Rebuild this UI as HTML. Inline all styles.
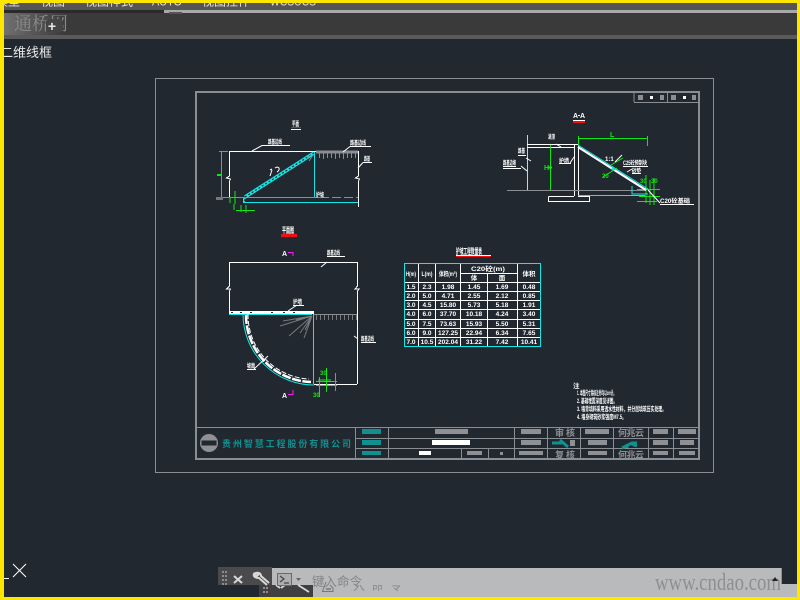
<!DOCTYPE html>
<html><head><meta charset="utf-8"><style>
html,body{margin:0;padding:0;width:800px;height:600px;overflow:hidden;background:#212830}
svg{display:block;position:absolute;left:0;top:0}
text{font-family:"Liberation Sans","Noto Sans CJK SC",sans-serif}
.w{stroke:#fff;fill:none;stroke-width:1}
.g{stroke:#12e612;fill:none;stroke-width:1}
.c{stroke:#14e6e6;fill:none;stroke-width:1}
.y{stroke:#8a8d91;fill:none;stroke-width:1}
.t{fill:#fff;font-size:6.500px;font-weight:bold;text-anchor:middle}
</style></head><body>
<svg width="800" height="600" viewBox="0 0 800 600">
<defs>
<linearGradient id="wm" x1="0" x2="1" y1="0" y2="0"><stop offset="0" stop-color="#707070"/><stop offset="1" stop-color="#3a3a3a"/></linearGradient>
<clipPath id="menu"><rect x="0" y="3" width="800" height="7"/></clipPath>
<clipPath id="cmd"><rect x="340" y="585" width="70" height="6"/></clipPath>
</defs>
<rect width="800" height="600" fill="#212830"/>
<!-- top chrome -->
<rect x="0" y="3" width="800" height="7" fill="#555"/>
<g clip-path="url(#menu)" fill="#e4e4e4" font-size="12">
<text x="-4" y="5.500">模型</text><text x="41" y="5.500">视图</text><text x="85" y="5.500">视图样式</text><text x="152" y="5.500" textLength="30" lengthAdjust="spacingAndGlyphs">AUTO</text><text x="202" y="5.500">视图控件</text><text x="270" y="5.500" textLength="46" lengthAdjust="spacingAndGlyphs">WCSUCS</text>
</g>
<rect x="0" y="10" width="800" height="25" fill="#3a3a3a"/>
<rect x="4" y="10" width="160" height="3" fill="#2a2a2a"/>
<rect x="164" y="10" width="636" height="3" fill="#a9a9a9"/>
<rect x="169" y="12" width="13" height="2" fill="#555"/>
<rect x="0" y="35" width="800" height="4" fill="#5a5a5a"/>
<rect x="4" y="13" width="62" height="22" fill="url(#wm)"/>
<text x="14" y="30" font-size="18" fill="#8a8a8a" style="font-family:'Noto Serif CJK SC',serif">通桥网</text>
<rect x="46" y="19" width="17" height="13" rx="3" fill="#444"/>
<text x="52" y="31" font-size="14" fill="#e8e8e8" text-anchor="middle" font-weight="bold">+</text>
<text x="0" y="57" font-size="13" fill="#e8e8e8">二维线框</text>

<!-- sheet -->
<g shape-rendering="crispEdges">
<rect x="155.500" y="78.500" width="558" height="394" class="y"/>
<rect x="196" y="92" width="503" height="367" fill="none" stroke="#8a8d91" stroke-width="2"/>
<path class="y" d="M634 102V92M634 102.500H699M667.500 92V102"/>
<g fill="#8a8d91"><rect x="638" y="95" width="5" height="5"/><rect x="650" y="96" width="3" height="3" fill="#fff"/><rect x="660" y="95" width="4" height="5"/><rect x="671" y="95" width="5" height="5"/><rect x="683" y="96" width="3" height="3" fill="#fff"/><rect x="692" y="95" width="4" height="5"/></g>

<!-- title block -->
<path class="y" d="M196 427.500H699M355.500 427V459M388.500 427V459M355 438.500H699M355 448.500H699M514.500 427V459M547.500 427V459M580.500 427V459M613.500 427V459M648.500 427V459M673.500 427V459M461.500 448V459M488.500 448V459"/>
<g fill="#10908f"><rect x="362" y="429" width="19" height="5"/><rect x="362" y="440" width="19" height="5"/><rect x="362" y="451" width="19" height="4"/></g>
<g fill="#8e9094"><rect x="435" y="429" width="33" height="5"/><rect x="521" y="429" width="20" height="5"/><rect x="585" y="429" width="24" height="5"/><rect x="653" y="429" width="15" height="5"/><rect x="678" y="429" width="18" height="5"/>
<rect x="521" y="440" width="20" height="5"/><rect x="588" y="440" width="19" height="5"/><rect x="653" y="440" width="15" height="5"/><rect x="680" y="440" width="14" height="5"/>
<rect x="467" y="451" width="15" height="4"/><rect x="500" y="452" width="3" height="3"/><rect x="519" y="451" width="24" height="4"/><rect x="588" y="451" width="19" height="4"/><rect x="653" y="451" width="15" height="4"/><rect x="679" y="451" width="16" height="4"/></g>
<g fill="#fff"><rect x="432" y="440" width="38" height="5"/><rect x="419" y="451" width="12" height="4"/></g>
</g>
<circle cx="209" cy="443" r="9" fill="#8e9094"/>
<rect x="201" y="440" width="16" height="6" fill="#212830" stroke="#8e9094"/>
<text x="222" y="447" font-size="9" font-weight="bold" fill="#10908f" textLength="129" lengthAdjust="spacing">贵州智慧工程股份有限公司</text>
<g font-size="9" fill="#8e9094" font-weight="bold" style="font-family:'Noto Serif CJK SC',serif">
<text x="555" y="436" textLength="20" lengthAdjust="spacing">审核</text><text x="618" y="436" textLength="26" lengthAdjust="spacing">何兆云</text><text x="555" y="458" textLength="20" lengthAdjust="spacing">复核</text><text x="618" y="458" textLength="26" lengthAdjust="spacing">何兆云</text>
</g>
<path d="M552 443H564M560 440L568 447" stroke="#10908f" stroke-width="3" fill="none"/>
<path d="M622 448L632 443H637M627 444V448M632 444L637 446" stroke="#10908f" stroke-width="3" fill="none"/>
<rect x="570" y="440" width="5" height="6" fill="#8e9094"/>

<!-- notes -->
<g fill="#fff" font-size="6.500" font-weight="bold">
<text x="573" y="388">注</text>
<text x="577" y="395" textLength="39" lengthAdjust="spacingAndGlyphs">1. 本图尺寸除标注外均以cm计。</text>
<text x="577" y="403" textLength="40" lengthAdjust="spacingAndGlyphs">2. 基础埋置深度见详图。</text>
<text x="577" y="411" textLength="89" lengthAdjust="spacingAndGlyphs">3. 墙背填料采用透水性材料，并分层填筑压实处理。</text>
<text x="577" y="419" textLength="49" lengthAdjust="spacingAndGlyphs">4. 墙身砌筑砂浆强度M7.5。</text>
</g>

<!-- plan view -->
<g shape-rendering="crispEdges">
<path class="w" d="M229.500 151.500H358.500M229.500 151V176M229.500 181V197M358.500 151V176M358.500 181V207"/>
<path class="w" d="M229.500 176L226.500 178L230.500 179L229.500 181M358.500 176L355.500 178L359.500 179L358.500 181"/>
<path d="M216 197.500H320" stroke="#8a8d91"/>
<path d="M320 197.500H358" stroke="#8a8d91" stroke-dasharray="9 3"/>
<rect x="216" y="197" width="7" height="3" fill="#777"/>
<path class="c" d="M243 202.500H358M314.500 152V197M243.500 198V202"/>
<path class="g" d="M219 151.500H228M221.500 152V197M217 174.500H222M217 175.500H222M235 191V204M230 198V203M234 204V210M236 210.500H255M246 205V213M241 205V212"/>
</g>
<path d="M245 197L314 153" stroke="#14e6e6" stroke-width="3.500" fill="none"/>
<path d="M245 197L314 153" stroke="#212830" stroke-width="1.200" stroke-dasharray="2 2" fill="none"/>
<path d="M246 198C243 199 243 201 245 202" class="c" fill="none"/>
<g stroke="#8a8d91" shape-rendering="crispEdges"><path d="M316 152H358" stroke-width="3"/><path d="M319.500 153V158M323.500 153V159M327.500 153V158M331.500 153V158M335.500 153V159M339.500 153V158M343.500 153V159M347.500 153V158M351.500 153V158M355.500 153V158" stroke-width="1"/></g>
<path d="M313 155L309 161M311 155L307 158" stroke="#8a8d91"/>
<g fill="#fff" font-weight="bold">
<text x="292" y="126" font-size="7" textLength="7" lengthAdjust="spacingAndGlyphs">平面</text>
<text x="268" y="144" font-size="6" textLength="14" lengthAdjust="spacingAndGlyphs">路基边线</text>
<text x="350" y="145" font-size="6" textLength="16" lengthAdjust="spacingAndGlyphs">路基边线</text>
<text x="364" y="161" font-size="6" textLength="6" lengthAdjust="spacingAndGlyphs">路基</text>
<text x="316" y="197" font-size="6" textLength="8" lengthAdjust="spacingAndGlyphs">护坡</text>
<text x="282" y="233" font-size="8" textLength="12" lengthAdjust="spacingAndGlyphs">平面图</text>
</g>
<path d="M270 170L272 169M275 168C279 165 281 170 277 172M272 170L270 176" stroke="#fff" fill="none"/>
<g shape-rendering="crispEdges">
<path class="w" d="M262 145.500H290M350 146.500H371M363 162.500H372"/>
<path d="M291 127.500H301" stroke="#f01010"/><path d="M291 129.500H301" stroke="#fff"/>
<rect x="281" y="234" width="16" height="3" fill="#f01010"/>
</g>
<path class="w" d="M262 145.500L252 151M350 146.500L343 152M363 162.500L358 168"/>

<!-- A-A section -->
<g shape-rendering="crispEdges">
<path d="M527.500 135V190" stroke="#f0e030"/>
<path class="w" d="M527 144.500H578M527 147.500H574M574.500 144V196M578.500 144V196M548.500 196.500H574M578 196.500H589.500V201.500H548.500V196.500"/>
<path d="M507 190.500H646" stroke="#8a8d91"/>
<path class="c" d="M578 195.500H645"/>
<path class="g" d="M550.500 145V190M548 167H552M548 168H552M578 138.500H647M578.500 136V146M647.500 136V146M646 175V203M637 201.500H657M639 196.500H660M654 178V205M650 180V205M637 189.500H660"/>
<path d="M573 120.500H585" stroke="#fff"/><rect x="573" y="121" width="12" height="2" fill="#f01010"/>
</g>
<path d="M578 147L646 190" stroke="#fff" stroke-width="2.200" fill="none"/>
<path d="M578 145L648 189" class="c"/>
<path d="M611 165L623 158M603 177L617 168" class="g"/>
<circle cx="613" cy="169" r="1.500" fill="#14e6e6"/>
<path class="w" d="M556 144L561 147M526 158L531 161M521 166L527 171M574 157L570 163M615 162L622 155M627 172L632 169M648 190L660 203"/>
<path d="M632 186V194H648" class="c"/>
<g fill="#fff" font-weight="bold" font-size="6">
<text x="573" y="118" font-size="7">A</text><rect x="578" y="115" width="2" height="1"/><text x="580" y="118" font-size="7">A</text>
<text x="548" y="139" textLength="7" lengthAdjust="spacingAndGlyphs">涵顶</text>
<text x="518" y="153" textLength="7" lengthAdjust="spacingAndGlyphs">路基</text>
<text x="503" y="165" textLength="13" lengthAdjust="spacingAndGlyphs">路基边坡</text>
<text x="559" y="163" textLength="10" lengthAdjust="spacingAndGlyphs">护墙</text>
<text x="623" y="165" textLength="24" lengthAdjust="spacingAndGlyphs">C25砼预制块</text>
<text x="632" y="173" textLength="9" lengthAdjust="spacingAndGlyphs">砂垫</text>
<text x="660" y="203" textLength="30" lengthAdjust="spacingAndGlyphs">C20砼基础</text>
<text x="605" y="161">1:1</text>
</g>
<text x="544" y="170" font-size="7" fill="#12e612" font-weight="bold">H</text>
<text x="610" y="137" font-size="7" fill="#12e612" font-weight="bold">L</text>
<g shape-rendering="crispEdges"><path class="w" d="M503 166.500H516M503 168.500H521M518 155.500H526M559 163.500H571M623 166.500H648M632 173.500H641M660 204.500H694"/></g>
<g fill="#12e612" font-size="6" font-weight="bold"><text x="640" y="183">30</text><text x="651" y="183">30</text><text x="602" y="178">20</text></g>

<!-- plan view 2 -->
<g shape-rendering="crispEdges">
<path class="w" d="M229.500 262.500H357.500M229.500 262V286M229.500 291V313M357.500 262V286M357.500 291V384M314 384.500H357"/>
<path class="w" d="M229.500 286L226.500 289L230.500 289L229.500 291M357.500 286L355 289L359 289L357.500 291"/>
<rect x="229" y="311" width="85" height="3" fill="#fff"/>
<path class="c" d="M229 314.500H312M313.500 314V384"/>
<path d="M314 314.500H357" stroke="#8a8d91"/>
<path d="M316.500 315V320M320.500 315V320M324.500 315V320M328.500 315V320M332.500 315V320M336.500 315V320M340.500 315V320M344.500 315V320M348.500 315V320M352.500 315V320M356.500 315V320" stroke="#77797d"/>
<path class="g" d="M316 381.500H337M316 385.500H337M319.500 377V397M326.500 368V392M335.500 373V391M318 380L331 380"/>
<path d="M288 252.500H293V256M288 394.500H293V390" fill="none" stroke="#f020f0"/>
</g>
<path d="M243 314A71 71 0 0 0 314 385" class="c"/>
<path d="M246 315A67 67 0 0 0 311 382" fill="none" stroke="#fff" stroke-width="2.500" stroke-dasharray="9 1.500"/>
<path d="M248 314A64 64 0 0 0 309 379" fill="none" stroke="#fff" stroke-width="1" stroke-dasharray="5 2"/>
<path d="M312 316L280 326M312 316L283 321M312 316L296 320M312 316L305 330M312 316L300 333M312 316L289 336M312 316L304 338" stroke="#77797d"/>
<path d="M232 313v-1M241 313v-1M251 313v-1M272 313v-1M284 313v-1M294 313v-1" stroke="#212830" stroke-width="2"/>
<path class="w" d="M327 262L321 267M297 305L288 311M254 369L268 356M354 336L358 339"/>
<g shape-rendering="crispEdges"><path class="w" d="M327 256.500H345M293 305.500H304M247 369.500H256M361 342.500H376"/></g>
<g fill="#fff" font-weight="bold" font-size="6">
<text x="327" y="255" textLength="13" lengthAdjust="spacingAndGlyphs">路基边线</text>
<text x="293" y="304" textLength="9" lengthAdjust="spacingAndGlyphs">护墙</text>
<text x="247" y="368" textLength="8" lengthAdjust="spacingAndGlyphs">坡面</text>
<text x="361" y="341" textLength="13" lengthAdjust="spacingAndGlyphs">路基边线</text>
<text x="282" y="256" font-size="7">A</text>
<text x="282" y="398" font-size="7">A</text>
</g>
<g fill="#12e612" font-size="6" font-weight="bold"><text x="320" y="375">30</text><text x="313" y="397">30</text></g>

<!-- table -->
<text x="456" y="254" fill="#fff" font-size="8" font-weight="bold" textLength="26" lengthAdjust="spacingAndGlyphs">护坡工程数量表</text>
<g shape-rendering="crispEdges">
<path d="M456 255.500H491" stroke="#fff"/><path d="M456 256.500H491" stroke="#f01010"/>
<rect x="404.500" y="263.500" width="136" height="83" class="c"/>
<path class="w" d="M418.500 264V346M435.500 264V346M460.500 264V346M487.500 273V346M517.500 264V346M460 273.500H517M405 282.500H540M405 291.500H540M405 300.500H540M405 309.500H540M405 319.500H540M405 328.500H540M405 337.500H540"/>
</g>
<g>
<text class="t" x="411" y="276" textLength="10" lengthAdjust="spacingAndGlyphs">H(m)</text><text class="t" x="427" y="276" textLength="11" lengthAdjust="spacingAndGlyphs">L(m)</text><text class="t" x="448" y="276" textLength="18" lengthAdjust="spacingAndGlyphs">体积(m³)</text><text class="t" x="488" y="271" textLength="34" lengthAdjust="spacingAndGlyphs">C20砼(m)</text><text class="t" x="474" y="280">体</text><text class="t" x="502" y="280">面</text><text class="t" x="529" y="276">体积</text>
<text class="t" x="411" y="289">1.5</text><text class="t" x="427" y="289">2.3</text><text class="t" x="448" y="289">1.98</text><text class="t" x="474" y="289">1.45</text><text class="t" x="502" y="289">1.69</text><text class="t" x="529" y="289">0.48</text>
<text class="t" x="411" y="298">2.0</text><text class="t" x="427" y="298">5.0</text><text class="t" x="448" y="298">4.71</text><text class="t" x="474" y="298">2.55</text><text class="t" x="502" y="298">2.12</text><text class="t" x="529" y="298">0.85</text>
<text class="t" x="411" y="307">3.0</text><text class="t" x="427" y="307">4.5</text><text class="t" x="448" y="307">15.80</text><text class="t" x="474" y="307">5.73</text><text class="t" x="502" y="307">5.18</text><text class="t" x="529" y="307">1.91</text>
<text class="t" x="411" y="316">4.0</text><text class="t" x="427" y="316">6.0</text><text class="t" x="448" y="316">37.70</text><text class="t" x="474" y="316">10.18</text><text class="t" x="502" y="316">4.24</text><text class="t" x="529" y="316">3.40</text>
<text class="t" x="411" y="326">5.0</text><text class="t" x="427" y="326">7.5</text><text class="t" x="448" y="326">73.63</text><text class="t" x="474" y="326">15.93</text><text class="t" x="502" y="326">5.50</text><text class="t" x="529" y="326">5.31</text>
<text class="t" x="411" y="335">6.0</text><text class="t" x="427" y="335">9.0</text><text class="t" x="448" y="335">127.25</text><text class="t" x="474" y="335">22.94</text><text class="t" x="502" y="335">6.34</text><text class="t" x="529" y="335">7.65</text>
<text class="t" x="411" y="344">7.0</text><text class="t" x="427" y="344">10.5</text><text class="t" x="448" y="344">202.04</text><text class="t" x="474" y="344">31.22</text><text class="t" x="502" y="344">7.42</text><text class="t" x="529" y="344">10.41</text>
</g>

<!-- UCS -->
<g shape-rendering="crispEdges"><path d="M4 578.500H9" stroke="#fff"/></g>
<path d="M13 564L26 577M26 564L13 577" stroke="#fff" fill="none"/>

<!-- command bar -->
<rect x="218" y="567" width="54" height="18" fill="#4a4a4c"/>
<rect x="272" y="568" width="510" height="29" fill="#b9babc"/>
<rect x="782" y="584" width="15" height="13" fill="#b9babc"/>
<path d="M781.500 568V584" stroke="#8e8e8e"/>
<rect x="259" y="585" width="54" height="12" fill="#404042"/>
<g fill="#8d8d8d"><rect x="222" y="571" width="2" height="2"/><rect x="225" y="571" width="2" height="2"/><rect x="222" y="575" width="2" height="2"/><rect x="225" y="575" width="2" height="2"/><rect x="222" y="579" width="2" height="2"/><rect x="225" y="579" width="2" height="2"/><rect x="222" y="583" width="2" height="2"/><rect x="225" y="583" width="2" height="2"/>
<rect x="263" y="587" width="2" height="2"/><rect x="266" y="587" width="2" height="2"/><rect x="263" y="591" width="2" height="2"/><rect x="266" y="591" width="2" height="2"/></g>
<path d="M234 576L242 583M242 576L234 583" stroke="#d8d8d8" stroke-width="2"/>
<path d="M267 585L259 578C255 578 253 576 254 574L257 576L259 574L256 573C259 572 261 574 261 576L269 583" fill="none" stroke="#d8d8d8" stroke-width="2"/>
<path d="M276 585L280 588M285 585L281 588M298 585L309 592" stroke="#d8d8d8" stroke-width="1.800" fill="none"/>
<rect x="277.500" y="573.500" width="14" height="12" fill="#aeaeb0" stroke="#6a6a6a"/>
<path d="M280 576L284 579L280 582M284 583H289" fill="none" stroke="#444" stroke-width="1.200"/>
<path d="M296 578H301L298.500 581Z" fill="#666"/>
<path d="M326 582L322.500 591.500H333V588L330 585" fill="none" stroke="#777"/>
<path d="M326 589H331" stroke="#555"/>
<text x="312" y="586" font-size="12.500" fill="#858585" textLength="50" lengthAdjust="spacing">键入命令</text>
<g clip-path="url(#cmd)"><text x="353" y="590" font-size="12" fill="#8a8a8a" textLength="49" lengthAdjust="spacing">入命令</text></g>
<text x="655" y="590" font-size="24" fill="#8f8f91" textLength="126" lengthAdjust="spacingAndGlyphs" style="font-family:'Liberation Serif',serif">www.cndao.com</text>
<path d="M772 581L775 577L778 581Z" fill="#222"/>

<!-- yellow frame -->
<g fill="#ffe600"><rect x="0" y="0" width="800" height="3"/><rect x="0" y="0" width="4" height="600"/><rect x="797" y="0" width="3" height="600"/><rect x="0" y="597" width="800" height="3"/></g>
</svg>
</body></html>
